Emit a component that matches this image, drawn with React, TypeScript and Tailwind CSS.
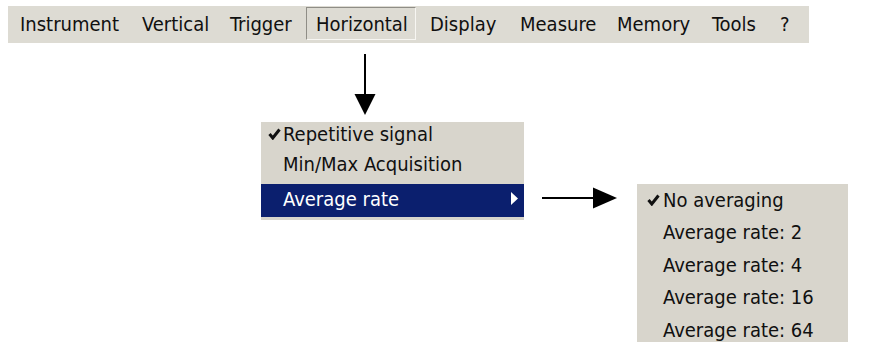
const font = { fontFamily: '"DejaVu Sans Condensed", "DejaVu Sans", sans-serif' };

const menuBar = [
  { label: "Instrument", w: "w-[122px]" },
  { label: "Vertical", w: "w-[88px]" },
  { label: "Trigger", w: "w-[86px]" },
  { label: "Horizontal", w: "w-[110px]", active: true },
  { label: "Display", w: "w-[90px]" },
  { label: "Measure", w: "w-[97px]" },
  { label: "Memory", w: "w-[95px]" },
  { label: "Tools", w: "w-[68px]" },
  { label: "?", w: "w-[30px]" },
];

const averages = ["Average rate: 2", "Average rate: 4", "Average rate: 16", "Average rate: 64"];

function Check() {
  return (
    <svg width="13" height="12" viewBox="0 0 13 12" className="shrink-0">
      <path d="M1.5 6 L4.8 10 L11.5 1.5" fill="none" stroke="#111" strokeWidth="3" strokeLinejoin="miter" />
    </svg>
  );
}

export default function App() {
  return (
    <div className="relative w-[874px] h-[342px] bg-white overflow-hidden text-[20px] text-[#101010]" style={font}>
      {/* menu bar */}
      <div className="ml-[8px] mt-[6px] flex h-[37px] w-[801px] items-start bg-[#dddbd3] pl-[2px]">
        {menuBar.map((m) => (
          <div
            key={m.label}
            className={`${m.w} mt-[1px] flex h-[33px] shrink-0 items-center pl-[10px] leading-none ${
              m.active ? "mr-[4px] border border-t-[#8f8d86] border-l-[#8f8d86] border-r-[#f7f6f2] border-b-[#f7f6f2]" : ""
            }`}
          >
            <span className={m.active ? "-ml-[1px]" : ""}>{m.label}</span>
          </div>
        ))}
      </div>

      <div className="flex items-start">
        {/* Horizontal menu with its arrow */}
        <div className="ml-[261px] flex w-[263px] flex-col">
          <svg width="24" height="62" viewBox="0 0 24 62" className="ml-[92px] mt-[11px]">
            <line x1="12" y1="0" x2="12" y2="44" stroke="#000" strokeWidth="2" />
            <polygon points="1.5,40 22.5,40 12,61" fill="#000" />
          </svg>
          <div className="mt-[6px] h-[98px] bg-[#d8d5cc] leading-none">
            <div className="flex h-[29px] items-center pb-[6px] pl-[7px]">
              <Check />
              <span className="ml-[2px]">Repetitive signal</span>
            </div>
            <div className="flex h-[33px] items-center pb-[8px] pl-[22px]">Min/Max Acquisition</div>
            <div className="flex h-[33px] items-center justify-between bg-[#0b1f6e] pb-[4px] pl-[22px] pr-[6px] text-white">
              <span>Average rate</span>
              <svg width="7" height="13" viewBox="0 0 7 13">
                <polygon points="0,0 7,6.5 0,13" fill="#fff" />
              </svg>
            </div>
          </div>
        </div>

        {/* arrow to the sub menu */}
        <svg width="76" height="22" viewBox="0 0 76 22" className="ml-[18px] mt-[144px] shrink-0">
          <line x1="0" y1="11" x2="56" y2="11" stroke="#000" strokeWidth="2" />
          <polygon points="51,0.5 75,11 51,21.5" fill="#000" />
        </svg>

        {/* Average rate sub menu */}
        <div className="ml-[19px] mt-[141px] h-[170px] w-[211px] shrink-0 bg-[#d8d5cc] leading-none">
          <div className="flex h-[32px] items-center pl-[10px]">
            <Check />
            <span className="ml-[3px]">No averaging</span>
          </div>
          {averages.map((a) => (
            <div key={a} className="flex h-[32.5px] items-center pl-[26px]">
              {a}
            </div>
          ))}
        </div>
      </div>
    </div>
  );
}
